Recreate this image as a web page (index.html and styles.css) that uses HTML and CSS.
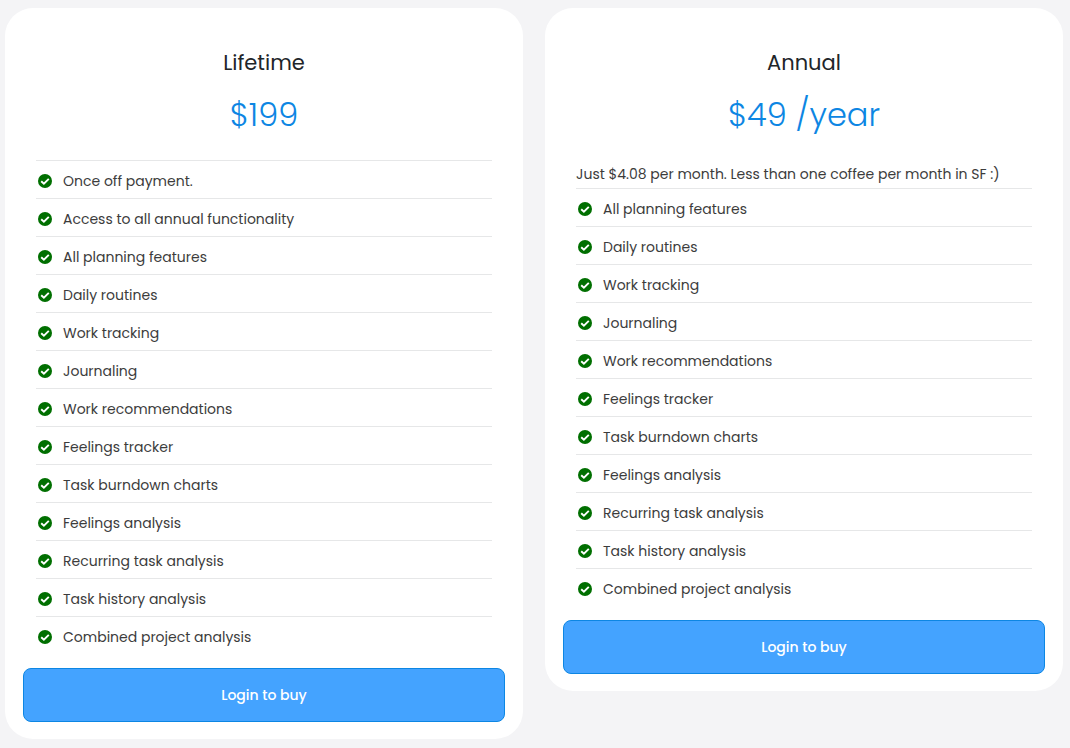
FILE: index.html
```html
<!DOCTYPE html>
<html lang="en">
    <head>
        <meta charset="utf-8">
        <meta name="viewport" content="width=device-width, initial-scale=1">
        <title>Pricing</title>
        <link rel="stylesheet" href="styles.css">
    </head>
    <body>
        <svg class="sprite" aria-hidden="true">
            <symbol id="check" viewBox="0 0 14 14">
                <circle cx="7" cy="7" r="7" fill="#006f00"/>
                <path d="M3.2 7.2 L5.9 9.7 L10.8 4.8" fill="none" stroke="#fff" stroke-width="1.9"/>
            </symbol>
        </svg>
        <main class="plans">
            <section class="plan">
                <h2 class="plan-name">Lifetime</h2>
                <p class="plan-price">$199</p>
                <ul class="features" id="lifetime-features"></ul>
                <button class="buy" type="button">Login to buy</button>
            </section>
            <section class="plan">
                <h2 class="plan-name">Annual</h2>
                <p class="plan-price">$49 /year</p>
                <p class="plan-note">Just $4.08 per month. Less than one coffee per month in SF :)</p>
                <ul class="features" id="annual-features"></ul>
                <button class="buy" type="button">Login to buy</button>
            </section>
        </main>
        <script>
            var annual = [
                "All planning features",
                "Daily routines",
                "Work tracking",
                "Journaling",
                "Work recommendations",
                "Feelings tracker",
                "Task burndown charts",
                "Feelings analysis",
                "Recurring task analysis",
                "Task history analysis",
                "Combined project analysis",
            ];
            var lifetime = ["Once off payment.", "Access to all annual functionality"].concat(annual);

            function render(id, features) {
                var html = "";
                features.forEach((name) => {
                    html += "<li class=\"feature\">";
                    html +=     "<svg class=\"check\" aria-hidden=\"true\"><use href=\"#check\"/></svg>";
                    html +=     "<span>" + name + "</span>";
                    html += "</li>";
                });
                document.getElementById(id).innerHTML = html;
            }

            render("lifetime-features", lifetime);
            render("annual-features", annual);
        </script>
    </body>
</html>
```

FILE: styles.css
```css
* {
    box-sizing: border-box;
}

body {
    margin: 0;
    background: #f4f4f6;
    color: #3c3c3c;
    font-family: Poppins, Inter, sans-serif;
    font-size: 14px;
    line-height: 24px;
}

.sprite {
    display: none;
}

.plans {
    display: grid;
    grid-template-columns: 1fr 1fr;
    align-items: start;
    gap: 22px;
    padding: 8px 7px 8px 5px;
}

.plan {
    padding: 39px 18px 17px;
    background: #fff;
    border-radius: 28px;
}

.plan-name {
    margin: 0;
    color: #212529;
    font-size: 21px;
    font-weight: 400;
    line-height: 32px;
    text-align: center;
}

.plan-price {
    margin: 12px 0 21px;
    color: #0d86e3;
    font-size: 32px;
    font-weight: 300;
    line-height: 48px;
    text-align: center;
}

.plan-note {
    margin: 0 13px;
    padding: 2px 0;
}

.features {
    margin: 0 13px 14px;
    padding: 0;
    list-style: none;
}

.feature {
    display: flex;
    align-items: center;
    gap: 11px;
    height: 38px;
    padding: 3px 2px 0;
    border-top: 1px solid #e6e7e8;
}

.check {
    flex: none;
    width: 14px;
    height: 14px;
}

.buy {
    display: block;
    width: 100%;
    padding: 14px;
    border: 1px solid #0d86e3;
    border-radius: 8px;
    background: #44a3ff;
    color: #fff;
    font: inherit;
    font-weight: 500;
    cursor: pointer;
}
```
